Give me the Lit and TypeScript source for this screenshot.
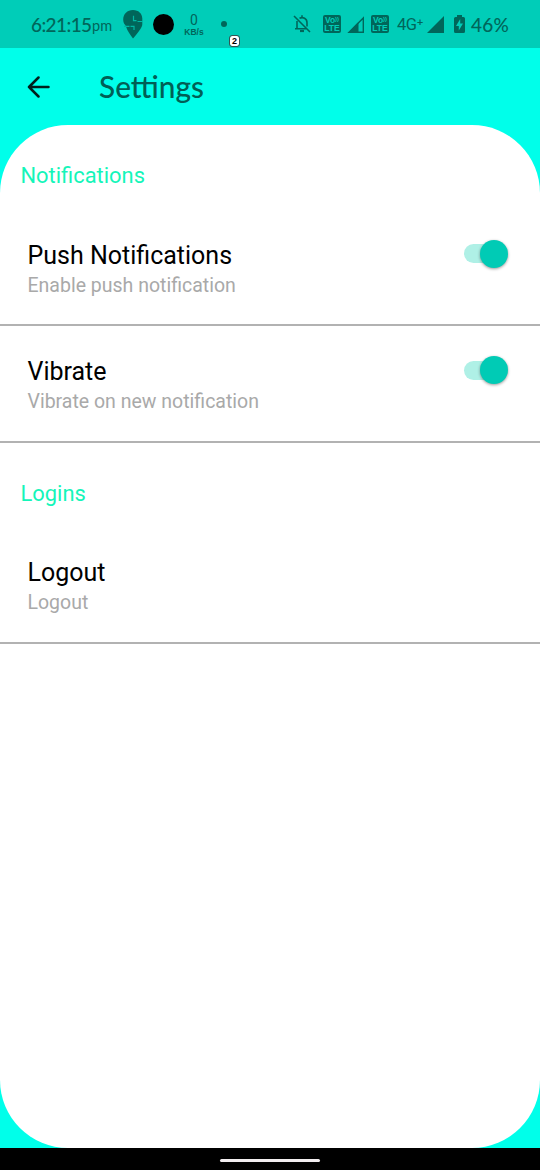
import { LitElement, html, css } from "lit";
import { customElement, property } from "lit/decorators.js";

@customElement("status-bar")
class StatusBar extends LitElement {
  static styles = css`
    :host { display: flex; align-items: center; justify-content: space-between; height: 48px; box-sizing: border-box; padding: 0 30px 0 31px; background: #00cdb8; color: #00665a; font-family: Lato, sans-serif; }
    .side { display: flex; align-items: center; height: 48px; white-space: nowrap; }
    svg { display: block; flex: none; }
    .time { width: 60px; font-size: 19px; font-weight: 500; line-height: 24px; letter-spacing: -0.6px; padding-top: 1px; }
    .pm { width: 24px; margin-left: 1px; font-size: 14.5px; line-height: 20px; padding-top: 4px; }
    .pin { margin-left: 7px; }
    .dot { width: 21px; height: 21px; border-radius: 50%; background: #000; margin-left: 10px; }
    .rate { width: 24px; margin-left: 8px; text-align: center; font-family: Roboto, sans-serif; padding-top: 1px; }
    .num { font-size: 14px; line-height: 14px; }
    .unit { font: bold 8.5px/10px "Liberation Sans", sans-serif; }
    .small { width: 6px; height: 6px; border-radius: 50%; background: #00665a; margin-left: 15px; }
    .badge { box-sizing: border-box; width: 9px; height: 10px; margin: 34px 0 0 3px; border-radius: 2px; background: #fff; color: #000; font: bold 9px/10px "Liberation Sans", sans-serif; text-align: center; outline: 0.5px solid #355; }
    .volte { display: flex; flex-direction: column; align-items: center; justify-content: center; box-sizing: border-box; width: 18px; height: 18px; margin-left: 12px; border-radius: 2px; background: #00665a; color: #00cdb8; font: bold 8.5px/8px "Liberation Sans", sans-serif; overflow: hidden; }
    .top { display: flex; }
    .waves { font-size: 6px; line-height: 6px; }
    .second { margin-left: 6px; }
    .sig { margin-left: 6px; }
    .net { width: 28px; margin-left: 8px; font: 16.5px/20px Roboto, sans-serif; letter-spacing: -0.4px; padding-top: 1px; }
    .sig2 { margin-left: 2px; }
    .bat { margin-left: 10px; }
    .pct { width: 39px; margin-left: 6px; font-size: 19px; line-height: 24px; padding-top: 1px; letter-spacing: 0.25px; font-weight: 500; }
  `;
  volte(cls = "") {
    return html`<div class="volte ${cls}"><div class="top">Vo<span class="waves">))</span></div><div>LTE</div></div>`;
  }
  render() {
    return html`
      <div class="side">
        <div class="time">6:21:15</div><div class="pm">pm</div>
        <svg class="pin" width="20" height="29" viewBox="0 0 20 29">
          <path fill="#00665a" d="M10 0C4.300 0 .2 4 .2 9.400c0 2.300.8 4.300 2 5.600l.8 1.500c1.200 4.200 4.500 8.400 7 12.100 4.200-5.300 9.300-10.700 9.300-14.400V8.500C19.100 3.500 15.500 0 10 0Z"></path>
          <path d="M10.500 5.800V10.600H13.500M20 11.500H14.500M1 16.400H6.500M7.500 16.400H11V20" fill="none" stroke="#00b7a4" stroke-width="1.200"></path>
        </svg>
        <div class="dot"></div>
        <div class="rate"><div class="num">0</div><div class="unit">KB/s</div></div>
        <div class="small"></div>
        <div class="badge">2</div>
      </div>
      <div class="side">
        <svg width="18" height="18" viewBox="0 0 18 18" fill="none" stroke="#00665a" stroke-width="1.6">
          <path d="M1 1 17 17M4 6v7.400M2 13.800h11.500M6.500 3.200C10 1.700 14 3.300 14 7.800v3.700M9 .3v2"></path>
          <path d="M7 16h4" stroke-width="2.200"></path>
        </svg>
        ${this.volte()}
        <svg class="sig" width="18" height="17" viewBox="0 0 18 17">
          <path d="M16.300 1.900V16.200H2Z" fill="none" stroke="#00665a" stroke-width="1.400"></path>
          <path d="M11.500 6V17H1Z" fill="#00665a"></path>
        </svg>
        ${this.volte("second")}
        <div class="net">4G⁺</div>
        <svg class="sig2" width="17" height="17" viewBox="0 0 17 17"><path d="M17 0V17H0Z" fill="#00665a"></path></svg>
        <svg class="bat" width="11" height="18" viewBox="0 0 11 18">
          <path d="M3 0h5v2h1.500q1.500 0 1.500 1.500v13Q11 18 9.500 18h-8Q0 18 0 16.500v-13Q0 2 1.500 2H3Z" fill="#00665a"></path>
          <path d="M6.200 4 2 11h2.800v4.500L9 8.500H6.200Z" fill="#00cdb8"></path>
        </svg>
        <div class="pct">46%</div>
      </div>`;
  }
}

@customElement("setting-row")
class SettingRow extends LitElement {
  @property() title = "";
  @property() detail = "";
  @property({ type: Boolean }) toggle = false;
  static styles = css`
    :host { display: flex; justify-content: space-between; box-sizing: border-box; height: 116.5px; padding: 30px 33px 0 27.5px; border-bottom: 2px solid #b2b2b2; font-family: Roboto, sans-serif; }
    .title { font-size: 25px; line-height: 32px; color: #000; }
    .detail { font-size: 19.5px; line-height: 24px; margin-top: 2px; color: #a9a9a9; }
    .track { display: flex; align-items: center; justify-content: flex-end; width: 43px; height: 19px; margin-top: 4.5px; border-radius: 10px; background: #aff0e6; }
    .thumb { flex: none; width: 28px; height: 28px; border-radius: 50%; background: #00cbb5; box-shadow: 0 1px 3px rgba(0, 0, 0, 0.4); margin-right: -1px; }
  `;
  render() {
    return html`<div><div class="title">${this.title}</div><div class="detail">${this.detail}</div></div>
      ${this.toggle ? html`<div class="track"><div class="thumb"></div></div>` : null}`;
  }
}

@customElement("app-root")
class AppRoot extends LitElement {
  static styles = css`
    :host { display: flex; flex-direction: column; width: 540px; height: 1170px; overflow: hidden; background: #00ffea; font-family: Roboto, sans-serif; }
    .header { display: flex; align-items: center; height: 77px; padding-left: 27px; flex: none; }
    .title { margin-left: 49px; font: 500 29.8px/36px Lato, sans-serif; color: #006056; }
    .panel { flex: 1; background: #fff; border-radius: 68px; overflow: hidden; }
    .section { box-sizing: border-box; height: 84.5px; padding: 37px 0 0 20.5px; font-size: 21.9px; line-height: 28px; color: #14f5b9; }
    .nav { display: flex; align-items: center; justify-content: center; flex: none; height: 22px; background: #000; }
    .handle { width: 100px; height: 3px; border-radius: 2px; background: #f2eef0; margin-top: 2px; }
  `;
  render() {
    return html`
      <status-bar></status-bar>
      <div class="header">
        <svg width="23" height="22" viewBox="0 0 23 22" fill="none" stroke="#00201d" stroke-width="2.5" stroke-linecap="round" stroke-linejoin="round"><path d="M21.500 11H2M11.500 1.500 2 11l9.500 9.500"></path></svg>
        <div class="title">Settings</div>
      </div>
      <div class="panel">
        <div class="section">Notifications</div>
        <setting-row title="Push Notifications" detail="Enable push notification" toggle></setting-row>
        <setting-row title="Vibrate" detail="Vibrate on new notification" toggle></setting-row>
        <div class="section">Logins</div>
        <setting-row title="Logout" detail="Logout"></setting-row>
      </div>
      <div class="nav"><div class="handle"></div></div>`;
  }
}
